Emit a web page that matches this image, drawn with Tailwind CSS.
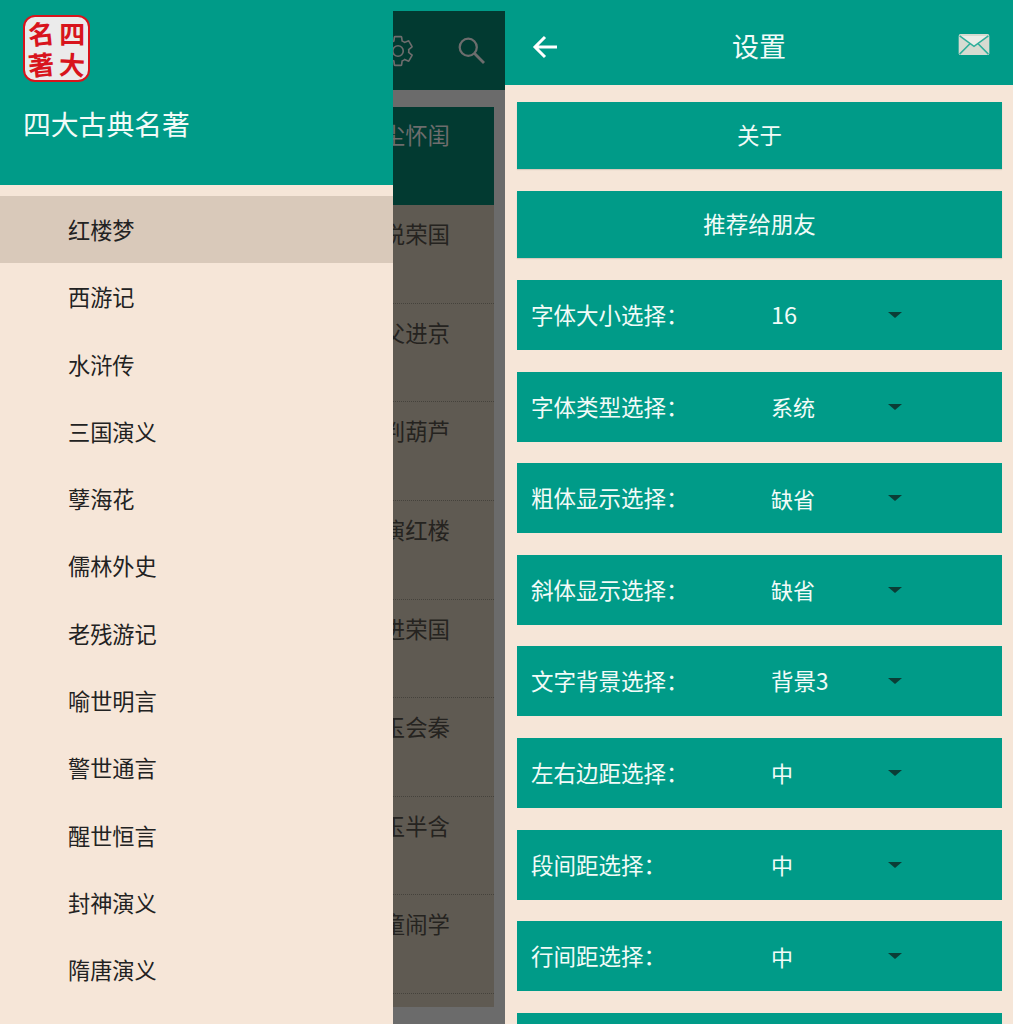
<!DOCTYPE html>
<html lang="zh">
  <head>
    <meta charset="UTF-8" />
    <meta name="viewport" content="width=device-width, initial-scale=1.0" />
    <title>四大古典名著</title>
    <script src="https://cdn.jsdelivr.net/npm/@tailwindcss/browser@4"></script>
  </head>
  <body class="h-[1024px] overflow-hidden bg-[#f6e6d8] font-['Noto_Sans_CJK_SC','Noto_Sans',sans-serif]">
    <div class="flex h-[1024px] w-[1013px] overflow-hidden">
      <!-- Drawer -->
      <aside class="h-full w-[393px] shrink-0 bg-[#f6e6d8]">
        <div class="h-[185px] bg-[#009b88] pl-[23px] pt-[15px]">
          <div class="grid h-[67px] w-[67px] grid-cols-2 place-items-center rounded-[12px] border-2 border-[#d8141c] bg-[#ebebeb] py-[1px] text-[26px] leading-[30px] font-bold text-[#d8141c]">
            <span class="-rotate-6">名</span><span>四</span><span class="-rotate-6">著</span><span class="rotate-3">大</span>
          </div>
          <p class="mt-[21px] text-[27.8px] leading-[40px] text-[#f2fbf8]">四大古典名著</p>
        </div>
        <ul class="pt-[11px] text-[22.2px] text-[#222222]">
          <li class="flex h-[67.3px] items-center bg-[#d9c9ba] pl-[68px]">红楼梦</li>
          <li class="flex h-[67.3px] items-center pl-[68px]">西游记</li>
          <li class="flex h-[67.3px] items-center pl-[68px]">水浒传</li>
          <li class="flex h-[67.3px] items-center pl-[68px]">三国演义</li>
          <li class="flex h-[67.3px] items-center pl-[68px]">孽海花</li>
          <li class="flex h-[67.3px] items-center pl-[68px]">儒林外史</li>
          <li class="flex h-[67.3px] items-center pl-[68px]">老残游记</li>
          <li class="flex h-[67.3px] items-center pl-[68px]">喻世明言</li>
          <li class="flex h-[67.3px] items-center pl-[68px]">警世通言</li>
          <li class="flex h-[67.3px] items-center pl-[68px]">醒世恒言</li>
          <li class="flex h-[67.3px] items-center pl-[68px]">封神演义</li>
          <li class="flex h-[67.3px] items-center pl-[68px]">隋唐演义</li>
        </ul>
      </aside>

      <!-- Screen behind the drawer, dimmed -->
      <section class="h-full w-[112px] shrink-0 overflow-hidden bg-[#009b88] pt-[11px]">
        <div class="flex h-[79px] items-center justify-end gap-[38px] overflow-hidden bg-[#023a31] pr-[15px] text-[#6d6d6d]">
          <svg class="h-9 w-9 shrink-0" viewBox="0 0 24 24" fill="none" stroke="currentColor" stroke-width="1.1">
            <path d="M19.14 12.94c.04-.3.06-.61.06-.94 0-.32-.02-.64-.07-.94l2.03-1.58c.18-.14.23-.41.12-.61l-1.92-3.32c-.12-.22-.37-.29-.59-.22l-2.39.96c-.5-.38-1.03-.7-1.62-.94l-.36-2.54c-.04-.24-.24-.41-.48-.41h-3.84c-.24 0-.43.17-.47.41l-.36 2.54c-.59.24-1.13.57-1.62.94l-2.39-.96c-.22-.08-.47 0-.59.22L2.74 8.87c-.12.21-.08.47.12.61l2.03 1.58c-.05.3-.09.63-.09.94s.02.64.07.94l-2.03 1.58c-.18.14-.23.41-.12.61l1.92 3.32c.12.22.37.29.59.22l2.39-.96c.5.38 1.03.7 1.62.94l.36 2.54c.05.24.24.41.48.41h3.84c.24 0 .44-.17.47-.41l.36-2.54c.59-.24 1.13-.56 1.62-.94l2.39.96c.22.08.47 0 .59-.22l1.92-3.32c.12-.22.07-.47-.12-.61l-2.01-1.58z" />
            <circle cx="12" cy="12" r="3.5" />
          </svg>
          <svg class="h-9 w-9 shrink-0" viewBox="0 0 24 24" fill="none" stroke="currentColor" stroke-width="1.5">
            <circle cx="9.5" cy="9.5" r="5.7" />
            <path d="M13.7 13.7 20 20" stroke-width="1.9" />
          </svg>
        </div>
        <div class="h-full bg-[#6b6b6b] pt-[17px] pr-[11px]">
          <ul class="h-[900px] overflow-hidden bg-[#5f5a52] text-[22.4px] text-[#252320]">
            <li class="flex h-[98px] justify-end overflow-hidden whitespace-nowrap bg-[#023a31] pt-[11px] pr-[44px] leading-[32px] text-[#6d6d6d]">风尘怀闺</li>
            <li class="flex h-[98.8px] justify-end overflow-hidden whitespace-nowrap border-b border-dotted border-[#45423c] pt-[12px] pr-[44px] leading-[32px]">演说荣国</li>
            <li class="flex h-[98.6px] justify-end overflow-hidden whitespace-nowrap border-b border-dotted border-[#45423c] pt-[12px] pr-[44px] leading-[32px]">岳父进京</li>
            <li class="flex h-[98.6px] justify-end overflow-hidden whitespace-nowrap border-b border-dotted border-[#45423c] pt-[12px] pr-[44px] leading-[32px]">乱判葫芦</li>
            <li class="flex h-[98.6px] justify-end overflow-hidden whitespace-nowrap border-b border-dotted border-[#45423c] pt-[12px] pr-[44px] leading-[32px]">曲演红楼</li>
            <li class="flex h-[98.6px] justify-end overflow-hidden whitespace-nowrap border-b border-dotted border-[#45423c] pt-[12px] pr-[44px] leading-[32px]">一进荣国</li>
            <li class="flex h-[98.6px] justify-end overflow-hidden whitespace-nowrap border-b border-dotted border-[#45423c] pt-[12px] pr-[44px] leading-[32px]">宝玉会秦</li>
            <li class="flex h-[98.6px] justify-end overflow-hidden whitespace-nowrap border-b border-dotted border-[#45423c] pt-[12px] pr-[44px] leading-[32px]">黛玉半含</li>
            <li class="flex h-[98.6px] justify-end overflow-hidden whitespace-nowrap border-b border-dotted border-[#45423c] pt-[12px] pr-[44px] leading-[32px]">顽童闹学</li>
          </ul>
        </div>
      </section>

      <!-- Settings -->
      <main class="h-full flex-1 overflow-hidden bg-[#f6e6d8]">
        <header class="flex h-[85px] items-center justify-between bg-[#009b88] pr-[22px] pl-[27px] text-white">
          <svg class="mt-[8px] h-[24px] w-[26px]" viewBox="0 0 26 24" fill="none" stroke="currentColor" stroke-width="3">
            <path d="M25 12H3M13 2 3 12l10 10" />
          </svg>
          <h1 class="mt-[6px] ml-[3px] text-[27px] leading-none text-[#f2fbf8]">设置</h1>
          <svg class="mt-[4px] h-[23px] w-[34px]" viewBox="0 0 34 24">
            <rect x="1" y="1" width="32" height="22" rx="2" fill="#d6dbd1" />
            <path d="M2 3 17 14 32 3" fill="#ebede8" stroke="#2faf9b" stroke-width="1.6" />
            <path d="M2 22 13 11M32 22 21 11" fill="none" stroke="#2faf9b" stroke-width="1.6" />
          </svg>
        </header>
        <div class="flex flex-col gap-[21.6px] pt-[17px] pr-[11px] pl-[12px] text-[22.5px] text-[#f2fbf8]">
          <button class="h-[67.4px] bg-[#009b88] pb-[1px] shadow-[0_1px_1px_rgba(0,0,0,0.12)]">关于</button>
          <button class="h-[67.4px] bg-[#009b88] pb-[1px] shadow-[0_1px_1px_rgba(0,0,0,0.12)]">推荐给朋友</button>
          <div class="flex h-[70px] shrink-0 items-center bg-[#009b88] pl-[14px]">
            <span class="w-[240px]">字体大小选择：</span><span class="w-[117px] text-[23.5px]">16</span>
            <span class="h-0 w-0 border-x-[7px] border-t-[6px] border-x-transparent border-t-[#0b3d36]"></span>
          </div>
          <div class="flex h-[70px] shrink-0 items-center bg-[#009b88] pl-[14px]">
            <span class="w-[240px]">字体类型选择：</span><span class="w-[117px] text-[22px]">系统</span>
            <span class="h-0 w-0 border-x-[7px] border-t-[6px] border-x-transparent border-t-[#0b3d36]"></span>
          </div>
          <div class="flex h-[70px] shrink-0 items-center bg-[#009b88] pl-[14px]">
            <span class="w-[240px]">粗体显示选择：</span><span class="w-[117px] text-[22px]">缺省</span>
            <span class="h-0 w-0 border-x-[7px] border-t-[6px] border-x-transparent border-t-[#0b3d36]"></span>
          </div>
          <div class="flex h-[70px] shrink-0 items-center bg-[#009b88] pl-[14px]">
            <span class="w-[240px]">斜体显示选择：</span><span class="w-[117px] text-[22px]">缺省</span>
            <span class="h-0 w-0 border-x-[7px] border-t-[6px] border-x-transparent border-t-[#0b3d36]"></span>
          </div>
          <div class="flex h-[70px] shrink-0 items-center bg-[#009b88] pl-[14px]">
            <span class="w-[240px]">文字背景选择：</span><span class="w-[117px] text-[22.5px]">背景3</span>
            <span class="h-0 w-0 border-x-[7px] border-t-[6px] border-x-transparent border-t-[#0b3d36]"></span>
          </div>
          <div class="flex h-[70px] shrink-0 items-center bg-[#009b88] pl-[14px]">
            <span class="w-[240px]">左右边距选择：</span><span class="w-[117px] text-[22px]">中</span>
            <span class="h-0 w-0 border-x-[7px] border-t-[6px] border-x-transparent border-t-[#0b3d36]"></span>
          </div>
          <div class="flex h-[70px] shrink-0 items-center bg-[#009b88] pl-[14px]">
            <span class="w-[240px]">段间距选择：</span><span class="w-[117px] text-[22px]">中</span>
            <span class="h-0 w-0 border-x-[7px] border-t-[6px] border-x-transparent border-t-[#0b3d36]"></span>
          </div>
          <div class="flex h-[70px] shrink-0 items-center bg-[#009b88] pl-[14px]">
            <span class="w-[240px]">行间距选择：</span><span class="w-[117px] text-[22px]">中</span>
            <span class="h-0 w-0 border-x-[7px] border-t-[6px] border-x-transparent border-t-[#0b3d36]"></span>
          </div>
          <div class="h-[70px] shrink-0 bg-[#009b88]"></div>
        </div>
      </main>
    </div>
  </body>
</html>
